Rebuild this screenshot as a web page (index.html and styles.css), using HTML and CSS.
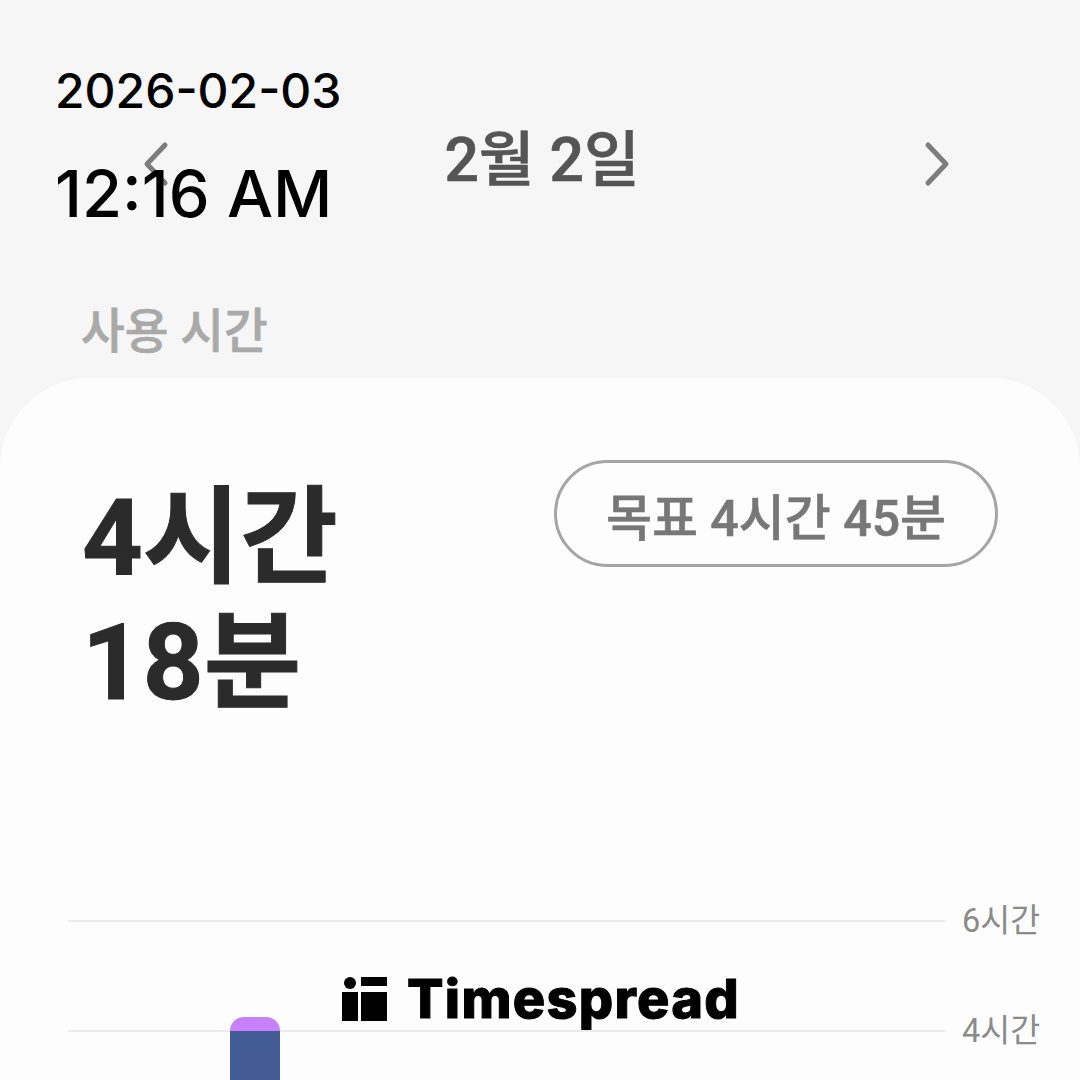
FILE: index.html
```html
<!DOCTYPE html>
<html lang="ko">
<head>
    <meta charset="UTF-8">
    <meta name="viewport" content="width=device-width, initial-scale=1.0">
    <title>사용 시간</title>
    <link rel="stylesheet" href="styles.css">
</head>
<body>
    <div class="screen">
        <div class="date-nav">
            <svg class="chevron" width="30" height="48" viewBox="0 0 30 48"><path d="M24 5 L6 24 L24 43" /></svg>
            <h1 class="date-title">2월 2일</h1>
            <svg class="chevron" width="30" height="48" viewBox="0 0 30 48"><path d="M6 5 L24 24 L6 43" /></svg>
        </div>
        <div class="section-label">사용 시간</div>

        <div class="card">
            <div class="summary">
                <div class="total">4시간<br>18분</div>
                <div class="goal">목표 4시간 45분</div>
            </div>
            <div class="chart">
                <div class="grid-row">
                    <div class="grid-line"></div>
                    <div class="grid-label">6시간</div>
                </div>
                <div class="grid-row">
                    <div class="grid-line"></div>
                    <div class="grid-label">4시간</div>
                </div>
                <div class="bar">
                    <div class="bar-over"></div>
                    <div class="bar-base"></div>
                </div>
            </div>
        </div>
    </div>

    <div class="stamp">
        <div class="stamp-date">2026-02-03</div>
        <div class="stamp-time">12:16 AM</div>
    </div>

    <div class="brand">
        <svg class="brand-icon" width="45" height="44" viewBox="0 0 45 44">
            <circle cx="8" cy="6" r="6" />
            <rect x="0" y="15" width="16" height="29" />
            <rect x="19" y="0" width="26" height="9" />
            <rect x="19" y="15" width="26" height="29" />
        </svg>
        <span class="brand-name">Timespread</span>
    </div>
</body>
</html>
```

FILE: styles.css
```css
html, body { margin: 0; padding: 0; }
body { width: 1080px; height: 1080px; overflow: hidden; background: #f6f6f6; font-family: "Roboto", "Noto Sans CJK KR", sans-serif; position: relative; }

.screen { height: 1080px; display: flex; flex-direction: column; }

.date-nav { display: flex; justify-content: space-between; align-items: center; height: 64px; margin-top: 132px; padding: 0 128px 0 141px; }
.date-title { margin: 0 0 6px -9px; font-size: 60.5px; font-weight: 500; color: #555; line-height: 64px; -webkit-text-stroke: 0.7px #555; }
.chevron { fill: none; stroke: #7d7d7d; stroke-width: 5; stroke-linecap: round; stroke-linejoin: round; }

.section-label { margin: 104px 0 0 81px; font-size: 47.5px; font-weight: 500; line-height: 64px; color: #a9a9a9; -webkit-text-stroke: 0.7px #a9a9a9; }

.card { flex: 1; margin-top: 14px; background: #fdfdfd; border-radius: 90px 90px 0 0; padding-top: 82px; }

.summary { display: flex; justify-content: space-between; align-items: flex-start; padding: 0 82px; height: 406px; }
.total { font-size: 106px; font-weight: 700; line-height: 125px; color: #2b2b2b; margin-top: 16px; -webkit-text-stroke: 1px #2b2b2b; }
.goal { box-sizing: border-box; height: 107px; width: 444px; border: 3px solid #a5a5a5; border-radius: 54px; display: flex; align-items: center; justify-content: center; font-size: 50px; font-weight: 500; color: #777; -webkit-text-stroke: 0.6px #777; }

.chart { position: relative; padding-left: 68px; }
.grid-row { display: flex; align-items: center; height: 110px; }
.grid-line { width: 877px; height: 2px; background: #ececec; }
.grid-label { margin-left: 17px; font-size: 32.5px; line-height: 40px; color: #8a8a8a; }

.bar { position: absolute; left: 230px; top: 151px; width: 50px; height: 64px; }
.bar-over { height: 14px; background: #c77ffa; border-radius: 14px 14px 0 0; }
.bar-base { height: 50px; background: #445c96; }

.stamp { position: absolute; left: 55px; top: 58px; color: #000; font-family: "Inter", sans-serif; font-weight: 500; }
.stamp-date { font-size: 48px; line-height: 66px; }
.stamp-time { font-size: 65px; line-height: 74px; margin-top: 33px; }

.brand { position: absolute; left: 342px; top: 975px; display: flex; align-items: center; gap: 20px; color: #000; }
.brand-name { font-family: "Inter", sans-serif; font-size: 54px; font-weight: 800; letter-spacing: 1.3px; line-height: 48px; -webkit-text-stroke: 1px #000; }
```
